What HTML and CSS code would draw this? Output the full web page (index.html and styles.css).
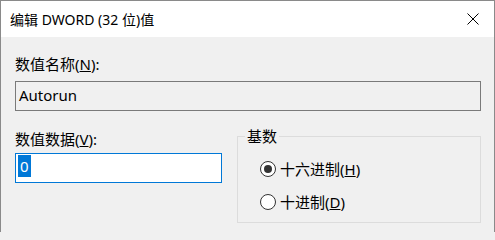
FILE: index.html
```html
<!DOCTYPE html>
<html lang="zh-CN">
<head>
<meta charset="utf-8">
<title>编辑 DWORD (32 位)值</title>
<link rel="stylesheet" href="styles.css">
</head>
<body>
<div class="window">
  <div class="titlebar">
    <span class="title">编辑 DWORD (32 位)值</span>
    <div class="close">
      <svg width="12" height="12" viewBox="0 0 12 12"><path d="M0.5 0.5L11.5 11.5M11.5 0.5L0.5 11.5" stroke="#000" stroke-width="1" fill="none"/></svg>
    </div>
  </div>
  <div class="content">
    <div class="label name-label">数值名称(<u>N</u>):</div>
    <div class="edit readonly">Autorun</div>
    <div class="row">
      <div class="left">
        <div class="label data-label">数值数据(<u>V</u>):</div>
        <div class="edit focused"><span class="sel">0</span></div>
      </div>
      <fieldset class="group">
        <legend class="legend">基数</legend>
        <label class="radio-row"><span class="radio checked"></span><span>十六进制(<u>H</u>)</span></label>
        <label class="radio-row"><span class="radio"></span><span>十进制(<u>D</u>)</span></label>
      </fieldset>
    </div>
  </div>
</div>
</body>
</html>
```
FILE: styles.css
```css
html, body {
  margin: 0;
  padding: 0;
}
body {
  width: 495px;
  height: 232px;
  overflow: hidden;
  background: #f0f0f0;
  font-family: "Noto Sans", "Noto Sans CJK SC", sans-serif;
  font-size: 15px;
  color: #000;
}
.window {
  box-sizing: border-box;
  width: 495px;
  height: 232px;
  border: 1px solid #8a8a8a;
  border-bottom: none;
  background: #f0f0f0;
}
.titlebar {
  height: 36px;
  background: #fff;
  display: flex;
  align-items: center;
  justify-content: space-between;
  padding-left: 9px;
}
.title {
  font-size: 14px;
  line-height: 20px;
  padding-top: 1px;
}
.close {
  width: 42px;
  height: 36px;
  display: flex;
  align-items: center;
  justify-content: center;
}
.close svg {
  display: block;
}
.content {
  padding: 0 13px 0 14px;
}
.label {
  line-height: 20px;
}
.name-label {
  margin-top: 17px;
}
.edit {
  box-sizing: border-box;
  height: 30px;
  line-height: 26px;
  padding-left: 3px;
  border: 1px solid #7a7a7a;
}
.readonly {
  margin-top: 7px;
  width: 466px;
  background: #f0f0f0;
}
.row {
  display: flex;
  align-items: flex-start;
  gap: 15px;
  margin-top: 15px;
}
.left {
  width: 207px;
  padding-top: 3px;
}
.data-label {
  margin-bottom: 4px;
}
.focused {
  background: #fff;
  border-color: #0078d7;
  padding-left: 2px;
  padding-top: 1px;
  line-height: 22px;
}
.sel {
  display: inline-block;
  background: #0078d7;
  color: #fff;
  padding: 0 2px;
  line-height: 22px;
}
.group {
  box-sizing: border-box;
  width: 244px;
  margin: 0;
  padding: 12px 0 9px 22px;
  border: 1px solid #dcdcdc;
  display: flex;
  flex-direction: column;
  gap: 11px;
  min-inline-size: 0;
}
.legend {
  padding: 0 2px;
  margin-left: -15px;
  line-height: 20px;
}
.radio-row {
  display: flex;
  align-items: center;
  gap: 4px;
  height: 22px;
  line-height: 22px;
}
.radio {
  box-sizing: border-box;
  width: 16px;
  height: 16px;
  border: 1px solid #333;
  border-radius: 50%;
  background: #fff;
  display: flex;
  align-items: center;
  justify-content: center;
}
.checked::after {
  content: "";
  width: 8px;
  height: 8px;
  border-radius: 50%;
  background: #333;
}
```
